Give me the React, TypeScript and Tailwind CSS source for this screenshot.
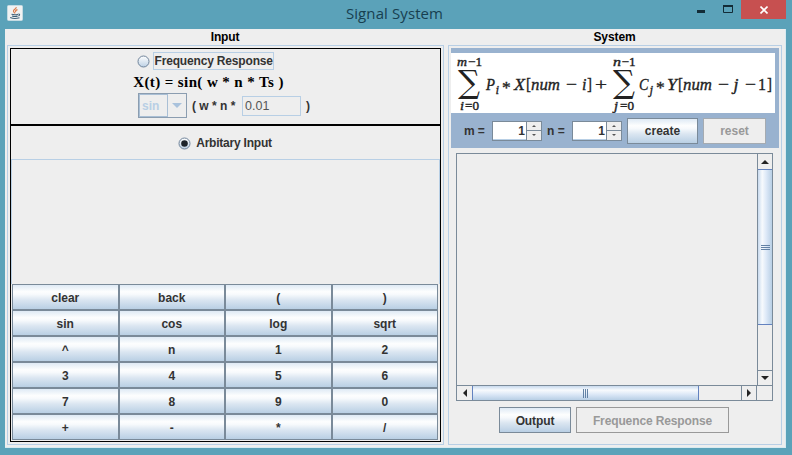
import React from "react";

const KEYS = [
  "clear", "back", "(", ")",
  "sin", "cos", "log", "sqrt",
  "^", "n", "1", "2",
  "3", "4", "5", "6",
  "7", "8", "9", "0",
  "+", "-", "*", "/",
];

const STEEL =
  "bg-[linear-gradient(to_bottom,#dfeaf5_0%,#fdfefe_28%,#f6f9fc_40%,#dbe6f1_62%,#b9cfe4_100%)]";

function TitleBar() {
  return (
    <header className="flex h-[29px] w-full items-start">
      <div className="w-[160px] pt-[5px] pl-[7px]">
        <svg width="16" height="16" viewBox="0 0 16 16">
          <rect x="0.5" y="0.5" width="15" height="15" rx="1" fill="#f1f2f2" stroke="#c5dbe2" />
          <path d="M9.2 2.2C9.6 4 6 4.700 6.500 6.300C6.700 7.200 7.800 7.600 7.800 8.500M10.500 4.600C8.800 5.200 8 6 8.900 7.200" fill="none" stroke="#dc7b4a" strokeWidth="1.200" />
          <path d="M4.500 9.300Q8 10.300 11 9.200M5 11Q8 12 10.700 11M11.300 9Q13.800 8.900 11.500 11.100M3.200 12.500Q7.500 14.400 12.500 12.700" fill="none" stroke="#3f6078" strokeWidth="1.100" />
        </svg>
      </div>
      <h1 className="flex-1 pt-[3px] pr-[3px] text-center font-['Open_Sans',sans-serif] text-[15px] leading-5 font-normal tracking-[0.1px] text-[#173f50]">
        Signal System
      </h1>
      <div className="flex h-[19px] w-[160px] justify-end pr-[6px]">
        <svg width="52" height="19">
          <rect x="8" y="10" width="8" height="3" fill="#132c37" />
          <path d="M34.500 6V12.500H43.500V6" fill="none" stroke="#132c37" />
          <rect x="34" y="5" width="10" height="2" fill="#132c37" />
        </svg>
        <div className="flex h-[19px] w-[45px] items-center justify-center bg-[#c75050]">
          <svg width="8" height="8">
            <path d="M0.500 0.500L7.500 7.500M7.500 0.500L0.500 7.500" stroke="#fff" strokeWidth="1.600" />
          </svg>
        </div>
      </div>
    </header>
  );
}

function Radio({ on = false }: { on?: boolean }) {
  return (
    <svg width="13" height="13" className="shrink-0">
      <defs>
        <linearGradient id="dot" x1="0" y1="0" x2="0" y2="1">
          <stop stopColor="#fff" />
          <stop offset="1" stopColor="#bcd0e4" />
        </linearGradient>
      </defs>
      <circle cx="6.500" cy="6.500" r="5.500" fill="url(#dot)" stroke="#70849a" />
      {on && <circle cx="6.500" cy="6.500" r="3.300" fill="#1d242b" />}
    </svg>
  );
}

function Spinner() {
  return (
    <div className="flex h-[20px] w-[50px] border border-[#7a8a99] bg-white">
      <div className="h-full flex-1 border-b border-[#b8cfe5] pr-[1px] text-right text-[12px] leading-[19px] text-[#333]">1</div>
      <div className="flex w-[15px] flex-col border-l border-[#7a8a99] bg-[#eee]">
        <div className="flex h-[9px] items-center justify-center border-b border-[#7a8a99]">
          <svg width="4" height="2"><path d="M0 2L2 0L4 2Z" fill="#555" /></svg>
        </div>
        <div className="flex flex-1 items-center justify-center">
          <svg width="4" height="2"><path d="M0 0L2 2L4 0Z" fill="#555" /></svg>
        </div>
      </div>
    </div>
  );
}

const UPRIGHT = "[]+−1*";

const TERMS: [string, number, number][] = [
  ["P", 35, 9], ["X", 63, 11], ["[", 75, 5], ["num", 80, 29], ["−", 115, 11], ["i", 131, 4.5], ["]", 136, 5], ["+", 144, 12],
  ["C", 188, 9.5], ["Y", 216, 10], ["[", 227, 5], ["num", 232, 29], ["−", 267, 11], ["j", 282.5, 5], ["−", 294, 11], ["1", 307, 8], ["]", 316, 5],
];

const LIMITS: [string, number, number, number][] = [
  ["m", 6, 13, 10], ["−1", 17, 13, 14],
  ["i", 9, 56.5, 4], ["=0", 14, 56.5, 14],
  ["n", 162, 13, 8], ["−1", 170.5, 13, 14],
  ["j", 163, 56.5, 4], ["=0", 169, 56.5, 14],
];

function Formula() {
  return (
    <svg width="324" height="60" className="block bg-white" fill="#222" fontFamily="'Liberation Serif', serif" fontWeight="400">
      <g fontSize="12.500" stroke="#222" strokeWidth="0.4">
        {LIMITS.map(([t, x, y, w]) => (
          <text key={`${t}${x}`} x={x} y={y} textLength={w} lengthAdjust="spacingAndGlyphs" fontStyle={t.length > 1 ? "normal" : "italic"}>{t}</text>
        ))}
      </g>
      <g fontFamily="'DejaVu Serif', serif" fontSize="32">
        <text x="7" y="40" textLength="22" lengthAdjust="spacingAndGlyphs">∑</text>
        <text x="162" y="40" textLength="22" lengthAdjust="spacingAndGlyphs">∑</text>
      </g>
      <g fontSize="17.500" stroke="#222" strokeWidth="0.35">
        {TERMS.map(([t, x, w]) => (
          <text key={x} x={x} y="36.500" textLength={w} lengthAdjust="spacingAndGlyphs" fontStyle={UPRIGHT.includes(t) ? "normal" : "italic"}>{t}</text>
        ))}
        <text x="51" y="39.500" textLength="8">*</text>
        <text x="205" y="39.500" textLength="8">*</text>
      </g>
      <g fontSize="13" fontStyle="italic" stroke="#222" strokeWidth="0.3">
        <text x="44.500" y="41">i</text>
        <text x="198.500" y="41">j</text>
      </g>
    </svg>
  );
}

function InputPanel() {
  return (
    <div className="flex h-[400px] w-[437px] flex-col border border-[#b8cfe5] p-[2px]">
      <div className="flex h-[395px] flex-col border border-black">
        <section className="flex h-[75px] flex-col items-center">
          <div className="mt-[3px] mr-[41px] flex h-[18px] items-center gap-[3px]">
            <Radio />
            <span className="h-[18px] w-[121px] border border-[#b8cfe5] pl-px leading-[17px] tracking-[-0.17px] whitespace-nowrap">Frequency Response</span>
          </div>
          <div className="mt-[2px] mr-[34px] h-[20px] font-['Liberation_Serif',serif] text-[15px] leading-[20px] tracking-[0.4px] whitespace-pre text-black">
            X(t) = sin( w * n * Ts )
          </div>
          <div className="mt-px mr-[3px] flex h-[25px] items-center">
            <div className="flex h-[25px] w-[49px] border border-[#8b9db0] text-[#b8cfe5]">
              <div className="w-[29px] border border-r border-[#a9bfd5] pl-[2px] text-[12px] leading-[22px]">sin</div>
              <div className="flex flex-1 items-center justify-center">
                <svg width="10" height="5"><path d="M0 0H10L5 5Z" fill="#a9c2dc" /></svg>
              </div>
            </div>
            <span className="w-[55px] pl-[5px] whitespace-pre">( w * n *</span>
            <div className="h-[20px] w-[59px] border border-[#b8cfe5] pl-[2px] text-[12.500px] leading-[19px] font-normal text-[#555]">0.01</div>
            <span className="pl-[5px]">)</span>
          </div>
        </section>
        <div className="h-[2px] bg-black" />
        <div className="flex h-[33px] items-center justify-center gap-[5px] pt-[1px] pr-px">
          <Radio on />
          <span className="tracking-[-0.22px]">Arbitary Input</span>
        </div>
        <div className="h-[125px] border border-b-0 border-[#b8cfe5]" />
        <div className="ml-px grid h-[156px] w-[426px] grid-cols-4 grid-rows-6">
          {KEYS.map((k) => (
            <div key={k} className={`flex items-center justify-center border border-[#7a8a99] pt-px ${STEEL}`}>{k}</div>
          ))}
        </div>
      </div>
    </div>
  );
}

function ScrollArea() {
  return (
    <div className="ml-[5px] grid h-[248px] w-[317px] grid-cols-[300px_15px] grid-rows-[231px_15px] border border-[#7a8a99]">
      <div className="bg-[#eee]" />
      <div className="flex flex-col border-l border-[#7a8a99]">
        <div className="flex h-[15px] items-center justify-center">
          <svg width="8" height="4"><path d="M0 4L4 0L8 4Z" fill="#222" /></svg>
        </div>
        <div className="flex h-[156px] items-center justify-center border-y border-[#6382bf] bg-[linear-gradient(to_right,#c8daee,#f7fafd_30%,#dce8f7_60%,#b8cfe5)]">
          <div className="flex h-[5px] w-[9px] flex-col justify-center border-y border-[#6382a5]"><div className="h-px bg-[#6382a5]" /></div>
        </div>
        <div className="flex-1" />
        <div className="flex h-[15px] items-center justify-center border-t border-[#7a8a99]">
          <svg width="8" height="4"><path d="M0 0L4 4L8 0Z" fill="#222" /></svg>
        </div>
      </div>
      <div className="flex border-t border-[#7a8a99]">
        <div className="flex w-[15px] items-center justify-center">
          <svg width="4" height="8"><path d="M4 0L0 4L4 8Z" fill="#222" /></svg>
        </div>
        <div className="flex w-[227px] items-center justify-center border-x border-[#6382bf] bg-[linear-gradient(to_bottom,#c8daee,#f7fafd_30%,#dce8f7_60%,#b8cfe5)]">
          <div className="h-[9px] w-[5px] border-x border-[#6382a5] px-px"><div className="h-full w-px bg-[#6382a5]" /></div>
        </div>
        <div className="flex-1" />
        <div className="flex w-[16px] items-center justify-center border-x border-[#7a8a99]">
          <svg width="4" height="8"><path d="M0 0L4 4L0 8Z" fill="#222" /></svg>
        </div>
      </div>
      <div className="border-t border-[#7a8a99]" />
    </div>
  );
}

function SystemPanel() {
  return (
    <div className="h-[400px] w-[334px] border border-[#b8cfe5] p-[2px]">
      <div className="mb-[5px] h-[100px] bg-[#99b2cf] pt-[5px]">
        <Formula />
        <div className="flex h-[35px] items-center pl-[13px]">
          <span className="w-[28px] tracking-[-0.1px]">m =</span>
          <Spinner />
          <span className="w-[30px] pl-[5px]">n =</span>
          <Spinner />
          <div className={`ml-[5px] flex h-[26px] w-[71px] items-center justify-center border border-[#7a8a99] ${STEEL}`}>create</div>
          <div className="ml-[5px] flex h-[26px] w-[63px] items-center justify-center border border-[#a5abb1] bg-[#eee] text-[#999]">reset</div>
        </div>
      </div>
      <ScrollArea />
      <div className="mt-[6px] ml-[48px] flex gap-[5px]">
        <div className={`flex h-[26px] w-[72px] items-center justify-center border border-[#7a8a99] pt-px tracking-[-0.1px] ${STEEL}`}>Output</div>
        <div className="flex h-[26px] w-[153px] items-center justify-center border border-[#999] pt-px tracking-[-0.12px] text-[#999]">Frequence Response</div>
      </div>
    </div>
  );
}

export default function App() {
  return (
    <div className="h-[455px] w-[792px] overflow-hidden bg-[#5ba2b9] font-['Liberation_Sans',Arial,sans-serif] text-[12px] font-bold text-[#333]">
      <TitleBar />
      <main className="ml-[5px] flex h-[419px] w-[781px] gap-[4px] border-r border-b border-[#d9eaf0] bg-[#eee] pl-[2px]">
        <div className="w-[437px]">
          <h2 className="h-[16px] pr-px text-center leading-[17px] tracking-[-0.15px] text-black">Input</h2>
          <InputPanel />
        </div>
        <div className="w-[334px]">
          <h2 className="h-[16px] pr-px text-center leading-[17px] tracking-[-0.1px] text-black">System</h2>
          <SystemPanel />
        </div>
      </main>
    </div>
  );
}
